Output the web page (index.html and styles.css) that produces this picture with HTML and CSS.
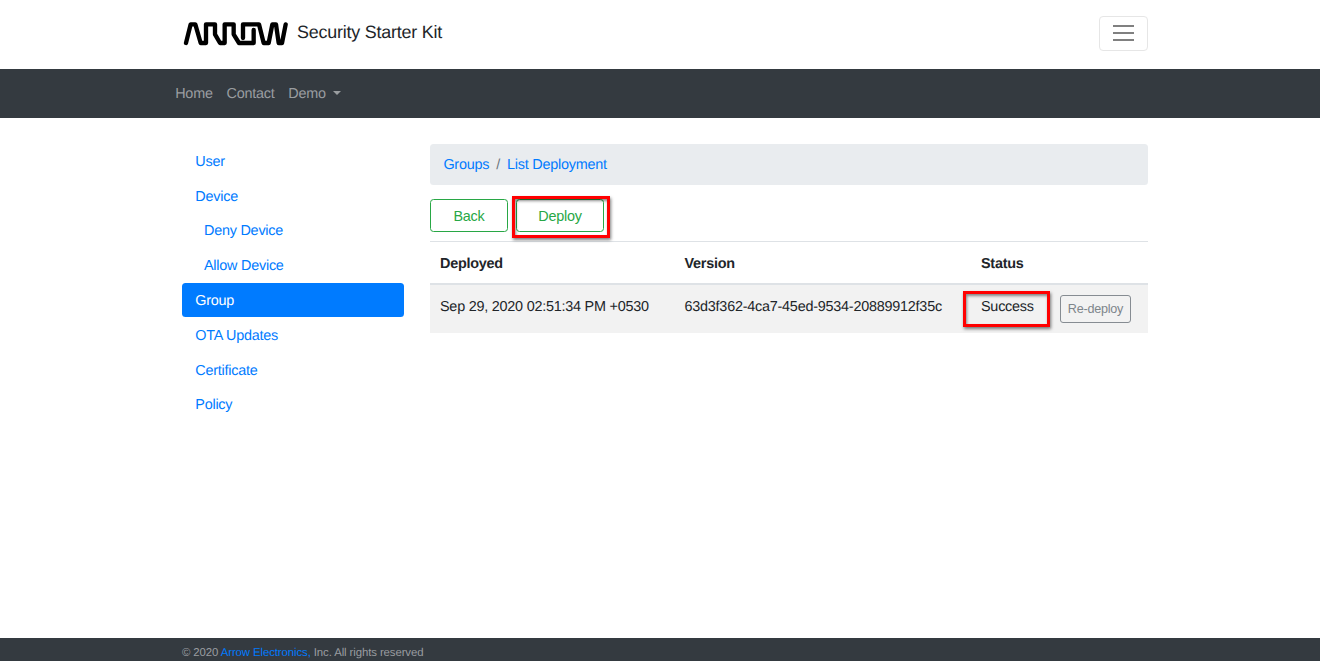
FILE: index.html
```html
<!DOCTYPE html>
<html lang="en">
<head>
<meta charset="utf-8">
<title>Security Starter Kit</title>
<link rel="stylesheet" href="styles.css">
</head>
<body>
<header class="header">
  <div class="container header-inner">
    <svg class="logo" viewBox="0 0 330 96" role="img" aria-label="Arrow">
      <path d="M12 75L26 19H40L56 75H72V19H99V49L114 75H128V19H155V49L171 75H215V36M183 60V19H231L245 75H260L271 19H282L290 75H300L311 19"/>
    </svg>
    <span class="brand">Security Starter Kit</span>
    <button class="toggler" aria-label="Menu"><span></span><span></span><span></span></button>
  </div>
</header>
<nav class="navbar">
  <div class="container navbar-inner">
    <a>Home</a><a>Contact</a><a class="dropdown">Demo</a>
  </div>
</nav>
<main class="container main">
  <aside class="sidebar">
    <a>User</a>
    <a>Device</a>
    <a class="sub">Deny Device</a>
    <a class="sub">Allow Device</a>
    <a class="active">Group</a>
    <a>OTA Updates</a>
    <a>Certificate</a>
    <a>Policy</a>
  </aside>
  <section class="content">
    <div class="breadcrumb"><a>Groups</a><i>/</i><a>List Deployment</a></div>
    <div class="actions">
      <button class="btn back">Back</button>
      <div class="mark-host"><button class="btn deploy">Deploy</button><span class="mark mark-deploy"></span></div>
    </div>
    <div class="table">
      <div class="row head"><b>Deployed</b><b>Version</b><b>Status</b></div>
      <div class="row body">
        <span>Sep 29, 2020 02:51:34 PM +0530</span>
        <span class="version">63d3f362-4ca7-45ed-9534-20889912f35c</span>
        <span class="mark-host">Success<span class="mark mark-status"></span></span>
        <button class="redeploy">Re-deploy</button>
      </div>
    </div>
  </section>
</main>
<footer class="footer">
  <div class="container footer-inner">© 2020 <a>Arrow Electronics,</a> Inc. All rights reserved</div>
</footer>
</body>
</html>
```
FILE: styles.css
```css
* { box-sizing: border-box; }
body {
  margin: 0;
  height: 661px;
  overflow: hidden;
  display: flex;
  flex-direction: column;
  background: #fff;
  color: #212529;
  font: 14.4px/21px "Liberation Sans", Arial, sans-serif;
  letter-spacing: -.23px;
  text-rendering: geometricPrecision;
}
button { font: inherit; letter-spacing: inherit; background: transparent; padding: 0; }
.container { width: 966px; margin-left: 182px; }
.header { height: 69px; flex: none; }
.header-inner { display: flex; align-items: flex-start; }
.logo { width: 110px; height: 32px; margin-top: 18px; fill: none; stroke: #000; stroke-width: 13; stroke-linecap: round; stroke-linejoin: round; }
.brand { margin: 19px 0 0 5px; font-size: 17.9px; line-height: 26px; letter-spacing: -.2px; }
.toggler {
  width: 49px; height: 35px; margin: 15.5px 0 0 auto;
  border: 1px solid #e6e6e6; border-radius: 4px;
  display: flex; flex-direction: column; align-items: center; justify-content: center; gap: 5px;
}
.toggler span { width: 21px; height: 2px; background: #808080; }
.navbar { height: 48.5px; flex: none; background: #343a40; }
.navbar-inner { display: flex; gap: 13.8px; padding-top: 15px; color: #9a9da0; }
.navbar-inner a:first-child { margin-left: -6.8px; }
.dropdown { display: flex; align-items: center; gap: 7px; }
.dropdown::after { content: ""; border: 4px solid transparent; border-top-color: currentColor; border-bottom: 0; margin-top: -3px; }
.main { flex: 1; display: flex; padding-top: 26px; }
.sidebar { width: 222px; margin-right: 26px; display: flex; flex-direction: column; color: #007bff; }
.sidebar a { height: 34.8px; padding: 8.3px 13.3px 0; border-radius: 3.5px; }
.sidebar .sub { padding-left: 22px; }
.sidebar .active { background: #007bff; color: #fff; }
.content { flex: 1; }
.breadcrumb {
  height: 41.5px; padding: 11.5px 13.4px 0; border-radius: 3.5px;
  display: flex; gap: 7px; background: #e9ecef; color: #007bff;
}
.breadcrumb i { font-style: normal; color: #6c757d; }
.actions { display: flex; gap: 8px; margin-top: 14px; height: 42px; }
.btn { height: 33px; padding-top: 1px; border: 1px solid #28a745; border-radius: 3.5px; color: #28a745; display: block; }
.back { width: 78px; }
.deploy { width: 88px; }
.mark-host { position: relative; }
.mark { position: absolute; border: 3px solid #f00; box-shadow: 1px 2px 3px rgba(0,0,0,.5), inset 1px 2px 3px rgba(0,0,0,.45); }
.mark-deploy { left: -4px; top: -3px; width: 98px; height: 42px; }
.mark-status { left: -18px; top: -6px; width: 87px; height: 36px; }
.row { display: grid; grid-template-columns: 244.5px 296.5px 79px 71px; padding-left: 10px; }
.head { height: 42px; padding-top: 11.5px; border-top: 1px solid #dee2e6; }
.body { height: 50px; padding-top: 12px; border-top: 2px solid #dee2e6; background: #f2f2f2; align-items: start; }
.redeploy { height: 28px; margin-top: -2px; padding-top: 1px; border: 1px solid #868c92; border-radius: 3px; color: #7e858b; font-size: 12.6px; }
.footer { height: 23.5px; flex: none; background: #343a40; color: #9a9da0; font-size: 11.4px; letter-spacing: -.1px; }
.footer-inner { padding-top: 5.5px; }
.footer a { color: #007bff; }
```
